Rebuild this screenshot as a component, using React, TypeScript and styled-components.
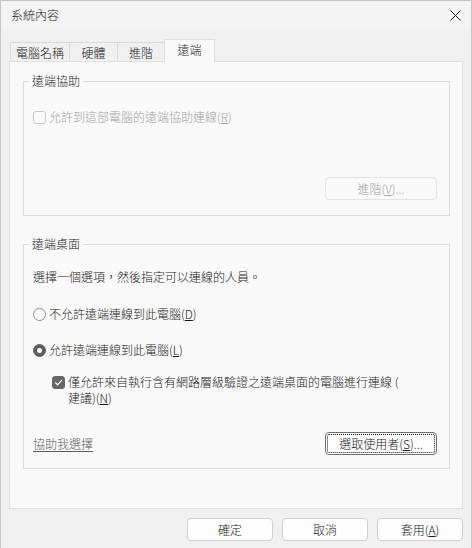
import React from 'react';
import styled, { createGlobalStyle, css } from 'styled-components';

const GlobalStyle = createGlobalStyle`
  html, body {
    margin: 0;
    padding: 0;
    background: #ffffff;
  }
  body {
    font-family: "Noto Sans CJK TC", "Microsoft JhengHei UI", sans-serif;
    font-size: 12px;
    font-weight: 300;
    line-height: 16px;
    color: #1b1b1b;
  }
  * {
    box-sizing: border-box;
  }
`;

const Window = styled.div`
  width: 472px;
  height: 548px;
  display: flex;
  flex-direction: column;
  background: #f0f0f0;
  border: 1px solid #c6c6c6;
  border-bottom: none;
`;

const TitleBar = styled.div`
  height: 30px;
  flex: none;
  display: flex;
  align-items: center;
  justify-content: space-between;
  padding: 0 10px 2px 10px;
  background: #f3f3f3;
`;

const Title = styled.span`
  font-size: 12px;
`;

const Body = styled.div`
  flex: 1;
  display: flex;
  flex-direction: column;
  padding: 8px 8px 7px 8px;
`;

const TabRow = styled.div`
  display: flex;
  align-items: flex-end;
  height: 22px;
  padding-left: 1px;
`;

const Tab = styled.div<{ $w: number; $active?: boolean }>`
  width: ${p => p.$w}px;
  height: 19px;
  display: flex;
  align-items: center;
  justify-content: center;
  padding-top: 1px;
  border: 1px solid #dadada;
  border-bottom: none;
  margin-right: -1px;
  background: #f0f0f0;
  ${p => p.$active && css`
    position: relative;
    z-index: 1;
    height: 23px;
    margin-bottom: -1px;
    background: #f9f9f9;
    border-color: #e0e0e0;
    padding-top: 0;
    padding-bottom: 2px;
  `}
`;

const Panel = styled.div`
  flex: 1;
  display: flex;
  flex-direction: column;
  background: #f9f9f9;
  border: 1px solid #e0e0e0;
  padding: 11px 12px 0 13px;
`;

const Group = styled.fieldset<{ $mt?: number }>`
  margin: ${p => p.$mt ?? 0}px 0 0 0;
  padding: 0;
  min-width: 0;
  border: 1px solid #dcdcdc;
`;

const Legend = styled.legend`
  margin-left: 5px;
  padding: 0 3px;
  line-height: 16px;
`;

const GroupBody = styled.div<{ $pt: number; $pb: number }>`
  display: flex;
  flex-direction: column;
  padding: ${p => p.$pt}px 12px ${p => p.$pb}px 9px;
`;

const Row = styled.div<{ $mt?: number; $indent?: number }>`
  display: flex;
  align-items: flex-start;
  gap: 3px;
  margin-top: ${p => p.$mt ?? 0}px;
  padding-left: ${p => p.$indent ?? 0}px;
`;

const ButtonRow = styled.div<{ $mt?: number }>`
  display: flex;
  align-items: center;
  justify-content: flex-end;
  margin-top: ${p => p.$mt ?? 0}px;
`;

const FooterRow = styled.div<{ $mt?: number }>`
  display: flex;
  align-items: center;
  justify-content: space-between;
  margin-top: ${p => p.$mt ?? 0}px;
`;

const Label = styled.span<{ $disabled?: boolean }>`
  line-height: 16px;
  color: ${p => (p.$disabled ? '#a3a3a3' : '#1b1b1b')};
`;

const Key = styled.span`
  text-decoration: underline;
  text-underline-offset: 1px;
`;

const Box = styled.span<{ $checked?: boolean; $disabled?: boolean }>`
  flex: none;
  width: 13px;
  height: 13px;
  margin-top: 2px;
  border-radius: 3px;
  display: flex;
  align-items: center;
  justify-content: center;
  border: 1px solid ${p => (p.$disabled ? '#c9c9c9' : p.$checked ? '#666666' : '#8a8a8a')};
  background: ${p => (p.$checked ? '#666666' : '#fbfbfb')};
`;

const Radio = styled.span<{ $checked?: boolean }>`
  flex: none;
  width: 13px;
  height: 13px;
  margin-top: 2px;
  border-radius: 50%;
  display: flex;
  align-items: center;
  justify-content: center;
  border: 1px solid ${p => (p.$checked ? '#5e5e5e' : '#8a8a8a')};
  background: ${p => (p.$checked ? '#5e5e5e' : '#fcfcfc')};
  &::after {
    content: '';
    display: ${p => (p.$checked ? 'block' : 'none')};
    width: 5px;
    height: 5px;
    border-radius: 50%;
    background: #ffffff;
  }
`;

const Button = styled.button<{ $w: number; $focused?: boolean }>`
  width: ${p => p.$w}px;
  height: 23px;
  padding: 0;
  font: inherit;
  line-height: 16px;
  color: #1b1b1b;
  background: #fdfdfd;
  border: 1px solid #d0d0d0;
  border-radius: 4px;
  &:disabled {
    color: #a3a3a3;
    background: #f9f9f9;
    border-color: #e3e3e3;
  }
  ${p => p.$focused && css`
    border-color: #707070;
    outline: 1px dotted #1b1b1b;
    outline-offset: -3px;
  `}
`;

const Intro = styled.div<{ $mt?: number }>`
  margin-top: ${p => p.$mt ?? 0}px;
`;

const HelpLink = styled.a`
  color: #5c5c5c;
  text-decoration: underline;
  text-underline-offset: 2px;
  cursor: pointer;
`;

const Footer = styled.div`
  display: flex;
  justify-content: flex-end;
  gap: 9px;
  margin-top: 9px;
`;

function CloseIcon() {
  return (
    <svg width="11" height="11" viewBox="0 0 11 11">
      <path d="M0.5 0.5 L10.5 10.5 M10.5 0.5 L0.5 10.5" stroke="#1b1b1b" strokeWidth="1" fill="none" />
    </svg>
  );
}

function CheckMark() {
  return (
    <svg width="9" height="9" viewBox="0 0 9 9">
      <path d="M1.5 4.8 L3.6 6.8 L7.6 2.3" stroke="#ffffff" strokeWidth="1.2" fill="none" strokeLinecap="round" strokeLinejoin="round" />
    </svg>
  );
}

export default function App() {
  return (
    <>
      <GlobalStyle />
      <Window>
        <TitleBar>
          <Title>系統內容</Title>
          <CloseIcon />
        </TitleBar>
        <Body>
          <TabRow>
            <Tab $w={60}>電腦名稱</Tab>
            <Tab $w={49}>硬體</Tab>
            <Tab $w={48}>進階</Tab>
            <Tab $w={51} $active>遠端</Tab>
          </TabRow>
          <Panel>
            <Group>
              <Legend>遠端協助</Legend>
              <GroupBody $pt={20} $pb={15}>
                <Row>
                  <Box $disabled />
                  <Label $disabled>允許到這部電腦的遠端協助連線(<Key>R</Key>)</Label>
                </Row>
                <ButtonRow $mt={52}>
                  <Button $w={112} disabled>進階(<Key>V</Key>)...</Button>
                </ButtonRow>
              </GroupBody>
            </Group>

            <Group $mt={20}>
              <Legend>遠端桌面</Legend>
              <GroupBody $pt={17} $pb={13}>
                <Intro>選擇一個選項，然後指定可以連線的人員。</Intro>
                <Row $mt={21}>
                  <Radio />
                  <Label>不允許遠端連線到此電腦(<Key>D</Key>)</Label>
                </Row>
                <Row $mt={20}>
                  <Radio $checked />
                  <Label>允許遠端連線到此電腦(<Key>L</Key>)</Label>
                </Row>
                <Row $mt={16} $indent={19}>
                  <Box $checked>
                    <CheckMark />
                  </Box>
                  <Label>
                    僅允許來自執行含有網路層級驗證之遠端桌面的電腦進行連線 (
                    <br />
                    建議)(<Key>N</Key>)
                  </Label>
                </Row>
                <FooterRow $mt={26}>
                  <HelpLink>協助我選擇</HelpLink>
                  <Button $w={112} $focused>選取使用者(<Key>S</Key>)...</Button>
                </FooterRow>
              </GroupBody>
            </Group>
          </Panel>
          <Footer>
            <Button $w={86}>確定</Button>
            <Button $w={86}>取消</Button>
            <Button $w={86}>套用(<Key>A</Key>)</Button>
          </Footer>
        </Body>
      </Window>
    </>
  );
}
